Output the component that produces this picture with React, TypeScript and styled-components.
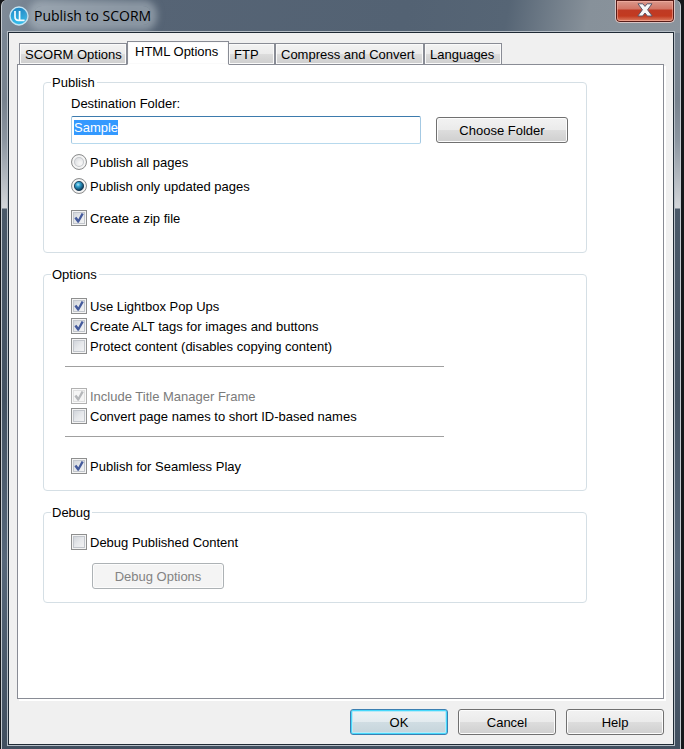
import React, { useEffect, useId, useRef, useState } from "react";
import styled, { createGlobalStyle, css } from "styled-components";

const GlobalStyle = createGlobalStyle`
  *, *::before, *::after { box-sizing: border-box; }
  body {
    margin: 0;
    background: #15171a;
    color: #000;
    font: 13px/16px "Liberation Sans", Arial, sans-serif;
  }
  button, input { font: inherit; color: inherit; }
`;

const Window = styled.main`
  display: flex;
  flex-direction: column;
  min-height: 100vh;
  margin: 0 3px 0 1px;
  padding: 0 5px 3px;
  border: solid #c3c9cf;
  border-width: 0 1px;
  border-top-left-radius: 6px;
  border-top-right-radius: 6px;
  background:
    linear-gradient(100deg, #7f8b98 0, #566475 130px, #536273 400px, #566575 500px, #87919a 580px, #8b949d 100%) 0 0 / 100% 33px no-repeat,
    linear-gradient(#7b8896 0, #77828e 100px, #8b95a0 140px, #d3d6da 208px, #4a5969 209px, #435262 400px, #56677a 560px, #414f5f 100%);
`;

const TitleBar = styled.header`
  display: flex;
  align-items: center;
  gap: 5px;
  height: 31px;
  padding-left: 2px;
`;

const Title = styled.h1`
  margin: 0;
  flex: 1;
  font: 14px/20px "Open Sans", "Noto Sans", sans-serif;

  span {
    border-radius: 8px;
    background: rgba(190, 199, 208, 0.5);
    box-shadow: 0 0 7px 6px rgba(190, 199, 208, 0.5);
  }
`;

const CloseButton = styled.button`
  display: flex;
  align-items: center;
  justify-content: center;
  align-self: flex-start;
  width: 60px;
  height: 23px;
  padding: 0 0 2px;
  border: 1px solid #d9c4c4;
  border-top: 0;
  border-radius: 0 0 5px 5px;
  background: linear-gradient(#dc9c90 0, #d27565 9px, #bf3a24 10px, #c23a20 16px, #e08a6e 100%);
  box-shadow: inset 0 0 0 1px #571c18, inset 0 0 0 2px rgba(255, 190, 175, 0.5);
`;

const Client = styled.div`
  display: flex;
  flex: 1;
  flex-direction: column;
  padding: 8px 9px 9px 8px;
  border: 1px solid #1f2a35;
  outline: 1px solid #b5bdc5;
  background: #f0f0f0;
  margin: 1px 1px 1px;
`;

const TabList = styled.div`
  display: flex;
  align-items: flex-end;
  padding-left: 2px;
`;

const Tab = styled.button<{ $width: number }>`
  min-width: ${(p) => p.$width}px;
  height: 22px;
  margin-bottom: -1px;
  padding: 1px 4px 0 5px;
  border: 1px solid #898c95;
  background: linear-gradient(#f3f3f3 0, #ebebeb 50%, #dcdcdc 51%, #cecece 100%);
  box-shadow: inset 0 0 0 1px #fafafa;
  text-align: left;
  white-space: nowrap;

  &[aria-selected="true"] {
    height: 24px;
    padding: 0 7px 3px;
    margin-right: -1px;
    border-bottom-color: #fff;
    background: #fff;
    z-index: 1;
  }
`;

const Panel = styled.section`
  flex: 1;
  padding: 9px 25px;
  border: 1px solid #898c95;
  background: #fff;
  box-shadow: 2px 2px 0 #fff;
`;

const Group = styled.fieldset`
  max-width: 544px;
  margin: 0 0 13px;
  padding: 0 18px 0 27px;
  border: 1px solid #d5dfe5;
  border-radius: 4px;
`;

const Legend = styled.legend`
  margin-left: -20px;
  padding: 0 2px 0 1px;
  line-height: 17px;
`;

const Stack = styled.div<{ $top: number; $bottom: number; $gap?: number }>`
  display: flex;
  flex-direction: column;
  align-items: stretch;
  gap: ${(p) => p.$gap ?? 0}px;
  padding: ${(p) => p.$top}px 0 ${(p) => p.$bottom}px;
`;

const FolderRow = styled.div`
  display: flex;
  align-items: center;
  gap: 15px;
  padding: 4px 0 8px;
`;

const FolderInput = styled.input`
  flex: 1;
  min-width: 0;
  height: 28px;
  padding: 0 2px 5px;
  border: 1px solid #a4c9e3;
  border-top-color: #3d7bad;
  border-bottom-color: #b7d9ed;
  border-radius: 2px;
  outline: none;
  background: #fff;

  &::selection { background: #3399ff; color: #fff; }
`;

const PushButton = styled.button<{ $width: number; $primary?: boolean }>`
  width: ${(p) => p.$width}px;
  height: 26px;
  padding: 2px 0 0;
  border: 1px solid #707070;
  border-radius: 3px;
  background: linear-gradient(#f2f2f2 0, #ebebeb 48%, #dddddd 50%, #cfcfcf 100%);
  box-shadow: inset 0 0 0 1px #fcfcfc;
  text-align: center;

  ${(p) =>
    p.$primary &&
    css`
      border-color: #3c7fb1;
      background: linear-gradient(#eef3f5 0, #e3ebef 48%, #d0dde3 50%, #c5d4db 100%);
      box-shadow: inset 0 0 0 1px #46d8fb, inset 0 0 0 2px #b9e9f7;
    `}

  &:disabled {
    border-color: #adb2b5;
    background: #f4f4f4;
    color: #838383;
  }
`;

const Choice = styled.label<{ $disabled?: boolean }>`
  display: flex;
  align-items: center;
  gap: 3px;
  height: 20px;
  line-height: 18px;
  color: ${(p) => (p.$disabled ? "#7b7b7b" : "#000")};
`;

const ChoiceText = styled.span`
  padding-top: 2px;
`;

const Mark = styled.span`
  display: grid;
  width: 16px;
  height: 16px;

  input, svg { grid-area: 1 / 1; }
  svg { visibility: hidden; pointer-events: none; }
  input:checked + svg { visibility: visible; }
`;

const Box = styled.input`
  appearance: none;
  width: 16px;
  height: 16px;
  margin: 0;
  border: 1px solid #8e8f8f;
  background: linear-gradient(135deg, #c9cdd4 0, #e6e8eb 50%, #f6f6f6 100%);
  box-shadow: inset 0 0 0 1px #f4f4f4, inset 0 0 0 2px #c2c6cc;

  &:disabled {
    border-color: #b1b1b1;
    background: #f5f5f5;
    box-shadow: inset 0 0 0 1px #fafafa, inset 0 0 0 2px #e0e0e0;
  }
`;

const Dot = styled.input`
  appearance: none;
  width: 16px;
  height: 16px;
  margin: 0;
  border: 1px solid #8e8f8f;
  border-radius: 50%;
  background: radial-gradient(circle at 60% 60%, #f5f5f5 10%, #d0d3d8 75%);
  box-shadow: inset 0 0 0 2px #f4f4f4, inset 0 0 0 3px #c5c8cc;
`;

const Rule = styled.hr`
  width: 379px;
  max-width: 100%;
  margin: 10px 0 19px -6px;
  border: 0;
  border-top: 1px solid #a0a0a0;
`;

const Indent = styled.div`
  padding: 11px 0 0 21px;
`;

const Footer = styled.footer`
  display: flex;
  justify-content: flex-end;
  gap: 10px;
  padding-top: 10px;
`;

function AppLogo() {
  return (
    <svg width="20" height="20" viewBox="0 0 20 20" aria-hidden="true">
      <defs>
        <linearGradient id="logo" x1="0" y1="0" x2="0" y2="1">
          <stop offset="0" stopColor="#1f86c4" />
          <stop offset="1" stopColor="#35c0ee" />
        </linearGradient>
      </defs>
      <circle cx="10" cy="10" r="9" fill="url(#logo)" stroke="#c4e6f5" strokeWidth="1.4" />
      <path d="M6 5V10.8Q6 14.4 9.6 14.4H15.6" fill="none" stroke="#f4fbfe" strokeWidth="1.7" />
      <path d="M10.6 5V14.4" fill="none" stroke="#f4fbfe" strokeWidth="1.7" />
    </svg>
  );
}

function CloseIcon() {
  return (
    <svg width="16" height="14" viewBox="0 0 16 14" aria-hidden="true">
      <path
        d="M1 .8h4.8L8 3.4 10.2.8H15L10.6 6.8 15.2 13h-4.8L8 10l-2.4 3H.8l4.6-6.2z"
        fill="#f7f7f7"
        stroke="#5b5566"
        strokeWidth="1"
        strokeLinejoin="round"
      />
    </svg>
  );
}

function CheckBox({ label, checked = false, disabled }: { label: string; checked?: boolean; disabled?: boolean }) {
  return (
    <Choice $disabled={disabled}>
      <Mark>
        <Box type="checkbox" defaultChecked={checked} disabled={disabled} />
        <svg width="16" height="16" viewBox="0 0 16 16" aria-hidden="true">
          <path d="M3.4 8.2 5.4 6.8l1.9 2.4L10.6 3l2.2 1-5 8.8H6.6z" fill={disabled ? "#b5b7ba" : "#455b9c"} />
        </svg>
      </Mark>
      <ChoiceText>{label}</ChoiceText>
    </Choice>
  );
}

function Radio({ label, name, checked = false }: { label: string; name: string; checked?: boolean }) {
  return (
    <Choice>
      <Mark>
        <Dot type="radio" name={name} defaultChecked={checked} />
        <svg width="16" height="16" viewBox="0 0 16 16" aria-hidden="true">
          <defs>
            <radialGradient id="bead" cx="0.4" cy="0.35" r="0.65">
              <stop offset="0" stopColor="#b4e8f8" />
              <stop offset="0.35" stopColor="#32a2cf" />
              <stop offset="1" stopColor="#0a3657" />
            </radialGradient>
          </defs>
          <circle cx="8" cy="8" r="4.6" fill="url(#bead)" stroke="#12354f" strokeWidth="0.8" />
        </svg>
      </Mark>
      <ChoiceText>{label}</ChoiceText>
    </Choice>
  );
}

const tabs = [
  { name: "SCORM Options", width: 108 },
  { name: "HTML Options", width: 102 },
  { name: "FTP", width: 47 },
  { name: "Compress and Convert", width: 149 },
  { name: "Languages", width: 78 },
];

export default function App() {
  const folderId = useId();
  const folder = useRef<HTMLInputElement>(null);
  const [active, setActive] = useState("HTML Options");

  useEffect(() => {
    folder.current?.focus();
    folder.current?.select();
  }, []);

  return (
    <>
      <GlobalStyle />
      <Window>
        <TitleBar>
          <AppLogo />
          <Title>
            <span>Publish to SCORM</span>
          </Title>
          <CloseButton type="button" aria-label="Close">
            <CloseIcon />
          </CloseButton>
        </TitleBar>
        <Client>
          <TabList role="tablist">
            {tabs.map((tab) => (
              <Tab
                key={tab.name}
                type="button"
                role="tab"
                aria-selected={tab.name === active}
                $width={tab.width}
                onClick={() => setActive(tab.name)}
              >
                {tab.name}
              </Tab>
            ))}
          </TabList>
          <Panel role="tabpanel">
            <Group>
              <Legend>Publish</Legend>
              <Stack $top={5} $bottom={24}>
                <label htmlFor={folderId}>Destination Folder:</label>
                <FolderRow>
                  <FolderInput id={folderId} ref={folder} type="text" defaultValue="Sample" />
                  <PushButton type="button" $width={132}>Choose Folder</PushButton>
                </FolderRow>
                <Stack $top={0} $bottom={12} $gap={4}>
                  <Radio name="scope" label="Publish all pages" />
                  <Radio name="scope" label="Publish only updated pages" checked />
                </Stack>
                <CheckBox label="Create a zip file" checked />
              </Stack>
            </Group>
            <Group>
              <Legend>Options</Legend>
              <Stack $top={13} $bottom={14}>
                <CheckBox label="Use Lightbox Pop Ups" checked />
                <CheckBox label="Create ALT tags for images and buttons" checked />
                <CheckBox label="Protect content (disables copying content)" />
                <Rule />
                <CheckBox label="Include Title Manager Frame" checked disabled />
                <CheckBox label="Convert page names to short ID-based names" />
                <Rule />
                <CheckBox label="Publish for Seamless Play" checked />
              </Stack>
            </Group>
            <Group>
              <Legend>Debug</Legend>
              <Stack $top={11} $bottom={13}>
                <CheckBox label="Debug Published Content" />
                <Indent>
                  <PushButton type="button" $width={132} disabled>Debug Options</PushButton>
                </Indent>
              </Stack>
            </Group>
          </Panel>
          <Footer>
            <PushButton type="button" $width={98} $primary>OK</PushButton>
            <PushButton type="button" $width={98}>Cancel</PushButton>
            <PushButton type="button" $width={98}>Help</PushButton>
          </Footer>
        </Client>
      </Window>
    </>
  );
}
